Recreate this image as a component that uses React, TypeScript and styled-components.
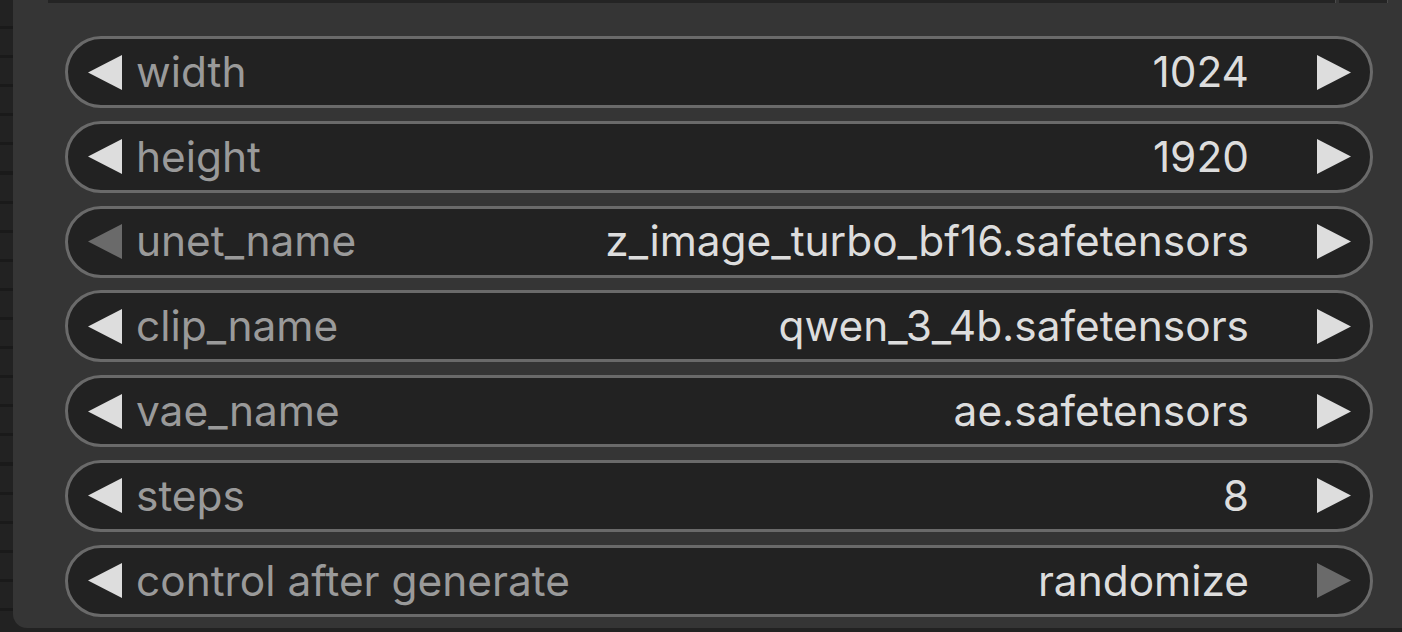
import React, { FC } from 'react';
import styled, { createGlobalStyle } from 'styled-components';

const GlobalStyle = createGlobalStyle`
  html, body {
    margin: 0;
    padding: 0;
    background: #222222;
    overflow: hidden;
  }
`;

const Canvas = styled.div`
  width: 1402px;
  height: 632px;
  display: flex;
  align-items: flex-start;
  background-color: #222222;
  background-image: repeating-linear-gradient(
    to bottom,
    transparent 0px,
    transparent 26px,
    #1a1a1a 26px,
    #1a1a1a 29.1px
  );
  font-family: Inter, 'Noto Sans', sans-serif;
`;

const Node = styled.div`
  margin-left: 13px;
  flex: 1;
  height: 628px;
  background: #353535;
  border-bottom-left-radius: 14px;
  display: flex;
  flex-direction: column;
`;

const TopStub = styled.div`
  display: flex;
  height: 3px;
  padding-left: 35px;
  gap: 3px;
`;

const StubBar = styled.div<{ $w: number }>`
  width: ${(p) => p.$w}px;
  background: #242424;
  border-right: 1px solid #4a4a4a;
`;

const Widgets = styled.div`
  display: flex;
  flex-direction: column;
  gap: 12.8px;
  padding: 33px 29px 0 52px;
`;

const Pill = styled.div`
  height: 72px;
  box-sizing: border-box;
  border: 3px solid #6a6a6a;
  border-radius: 36px;
  background: #222222;
  display: flex;
  align-items: center;
  padding: 0 19px 0 20px;
`;

const Arrow = styled.svg<{ $off?: boolean }>`
  width: 34px;
  height: 35px;
  flex: none;
  fill: ${(p) => (p.$off ? '#6a6a6a' : '#dddddd')};
`;

const Label = styled.span`
  margin-left: 14px;
  color: #9a9a9a;
  font-size: 42.4px;
  line-height: 1;
  white-space: nowrap;
`;

const Value = styled.span`
  margin-left: auto;
  margin-right: 68px;
  color: #dddddd;
  font-size: 42.4px;
  line-height: 1;
  white-space: nowrap;
`;

type Widget = { name: string; value: string; leftOff?: boolean; rightOff?: boolean };

const widgets: Widget[] = [
  { name: 'width', value: '1024' },
  { name: 'height', value: '1920' },
  { name: 'unet_name', value: 'z_image_turbo_bf16.safetensors', leftOff: true },
  { name: 'clip_name', value: 'qwen_3_4b.safetensors' },
  { name: 'vae_name', value: 'ae.safetensors' },
  { name: 'steps', value: '8' },
  { name: 'control after generate', value: 'randomize', rightOff: true },
];

const LeftArrow: FC<{ off?: boolean }> = ({ off }) => (
  <Arrow $off={off} viewBox="0 0 34 35">
    <polygon points="0,17.5 34,0 34,35" />
  </Arrow>
);

const RightArrow: FC<{ off?: boolean }> = ({ off }) => (
  <Arrow $off={off} viewBox="0 0 34 35">
    <polygon points="0,0 34,17.5 0,35" />
  </Arrow>
);

const App: FC = () => (
  <>
    <GlobalStyle />
    <Canvas>
      <Node>
        <TopStub>
          <StubBar $w={1287} />
          <StubBar $w={48} />
        </TopStub>
        <Widgets>
          {widgets.map((w) => (
            <Pill key={w.name}>
              <LeftArrow off={w.leftOff} />
              <Label>{w.name}</Label>
              <Value>{w.value}</Value>
              <RightArrow off={w.rightOff} />
            </Pill>
          ))}
        </Widgets>
      </Node>
    </Canvas>
  </>
);

export default App;
